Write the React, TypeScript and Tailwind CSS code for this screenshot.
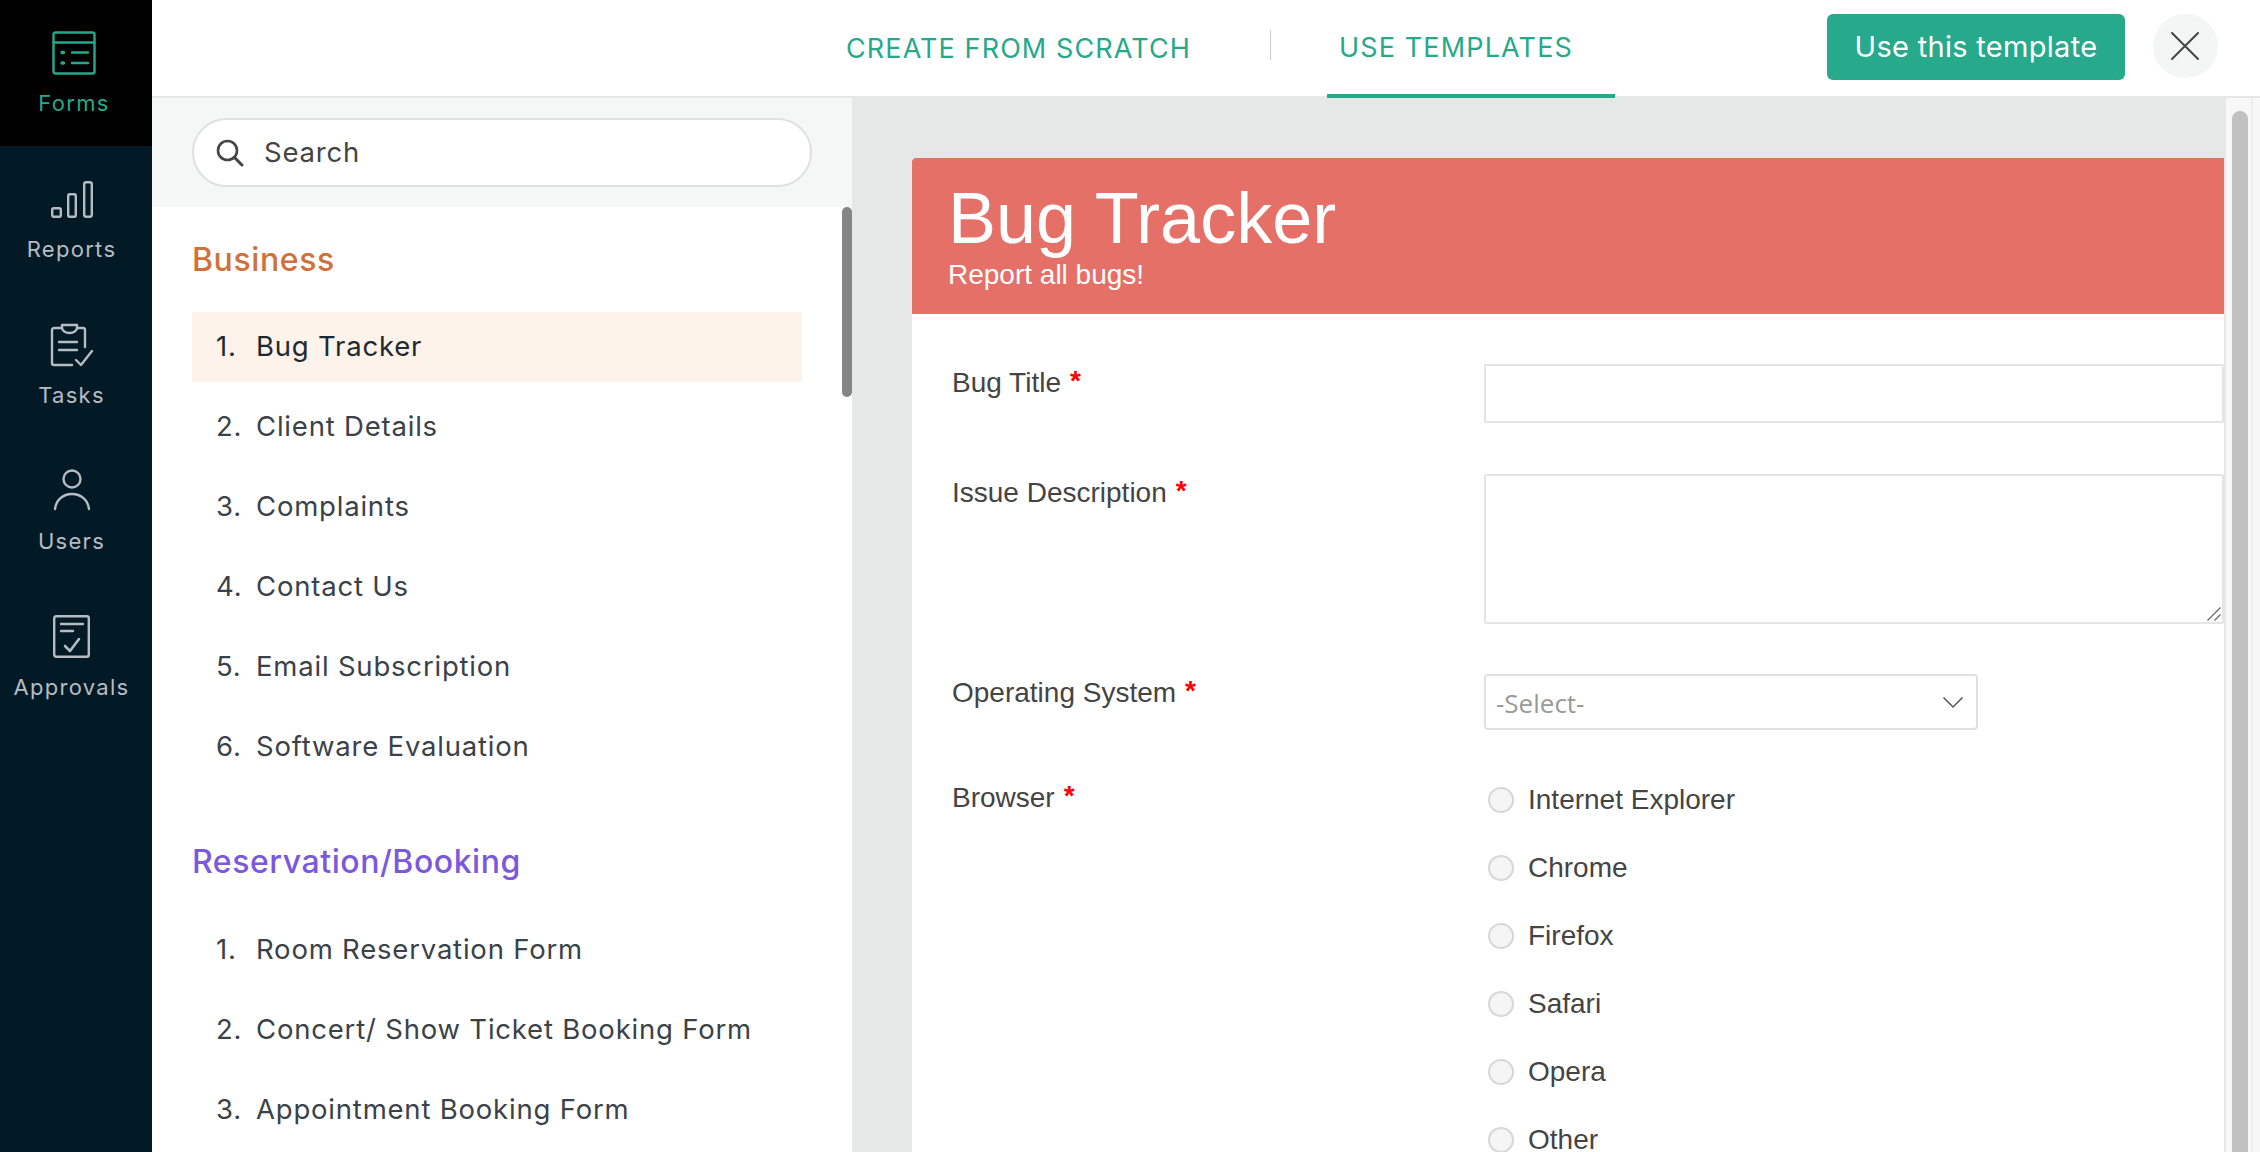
import React from "react";

function FormsIcon() {
  return (
    <svg width="44" height="44" viewBox="0 0 44 44" fill="none" stroke="#25a98a" strokeWidth="2.4" strokeLinecap="round" strokeLinejoin="round">
      <rect x="1.500" y="1.500" width="41" height="41" rx="2" />
      <path d="M1.500 11.500H42.500" />
      <path d="M10 21.500H11.500M10 32H11.500" strokeWidth="3.400" />
      <path d="M20 21.500H36M20 32H36" />
    </svg>
  );
}
function ReportsIcon() {
  return (
    <svg width="48" height="48" viewBox="0 0 48 48" fill="none" stroke="#b7bcc3" strokeWidth="2.400" strokeLinejoin="round">
      <rect x="3.200" y="33.200" width="8.600" height="8.600" rx="1.500" />
      <rect x="19.200" y="19.200" width="7.600" height="22.600" rx="1.500" />
      <rect x="35.200" y="7.200" width="7.600" height="34.600" rx="2" />
    </svg>
  );
}
function TasksIcon() {
  return (
    <svg width="48" height="48" viewBox="0 0 48 48" fill="none" stroke="#b7bcc3" strokeWidth="2.400" strokeLinecap="round" strokeLinejoin="round">
      <path d="M36 26V9a2 2 0 0 0-2-2h-6M13 7H5a2 2 0 0 0-2 2v33a2 2 0 0 0 2 2h18" />
      <path d="M13 4h15v3a7.500 5 0 0 1-15 0z" />
      <path d="M10 21H28M10 29H28" />
      <path d="M27 39l5 5 11-14" />
    </svg>
  );
}
function UsersIcon() {
  return (
    <svg width="48" height="48" viewBox="0 0 48 48" fill="none" stroke="#b7bcc3" strokeWidth="2.400" strokeLinecap="round">
      <circle cx="23" cy="12" r="8.500" />
      <path d="M6 42c1-9 8-15 17-15s16 6 17 15" />
    </svg>
  );
}
function ApprovalsIcon() {
  return (
    <svg width="48" height="48" viewBox="0 0 48 48" fill="none" stroke="#b7bcc3" strokeWidth="2.400" strokeLinecap="round" strokeLinejoin="round">
      <rect x="5.200" y="3.200" width="34.600" height="40.600" rx="2" />
      <path d="M12 11H34M12 18H24" />
      <path d="M16 33l5 5 9-12" strokeWidth="2.600" />
    </svg>
  );
}

const nav = [
  { label: "Forms", icon: <FormsIcon />, active: true },
  { label: "Reports", icon: <ReportsIcon /> },
  { label: "Tasks", icon: <TasksIcon /> },
  { label: "Users", icon: <UsersIcon /> },
  { label: "Approvals", icon: <ApprovalsIcon /> },
];

const business = ["Bug Tracker", "Client Details", "Complaints", "Contact Us", "Email Subscription", "Software Evaluation"];
const booking = ["Room Reservation Form", "Concert/ Show Ticket Booking Form", "Appointment Booking Form"];
const browsers = ["Internet Explorer", "Chrome", "Firefox", "Safari", "Opera", "Other"];

function Item({ n, text, active }: { n: number; text: string; active?: boolean }) {
  return (
    <div className={`flex h-[70px] w-[610px] items-center pl-[24px] text-[27.500px] tracking-[0.8px] ${active ? "bg-[#fdf3eb] text-[#1f2a30]" : "text-[#3a4248]"}`}>
      <span className="w-[40px]">{n}.</span>
      <span className="whitespace-nowrap">{text}</span>
    </div>
  );
}

function Req({ text }: { text: string }) {
  return (
    <div className="flex w-[532px] shrink-0 text-[28px] leading-[38px] text-[#444]">
      <span>{text}</span>
      <span className="ml-[9px] -translate-y-[2px] font-bold text-[#ff0000]">*</span>
    </div>
  );
}

export default function App() {
  return (
    <div className="flex h-[1152px] w-[2260px] overflow-hidden bg-white font-['Inter',sans-serif]">
      <aside className="w-[152px] shrink-0 bg-[#011a26]">
        {nav.map((n) => (
          <div key={n.label} className={`flex h-[146px] flex-col items-center pt-[29px] ${n.active ? "bg-black pr-[4px] text-[#25a98a]" : "pr-[6px] text-[#b7bcc3]"}`}>
            <div className="flex h-[48px] w-[48px] items-center justify-center">{n.icon}</div>
            <div className={`mt-[13px] text-[22px] leading-[26px] tracking-[1.3px] ${n.active ? "" : "mr-[3px]"}`}>{n.label}</div>
          </div>
        ))}
      </aside>

      <div className="flex min-w-0 flex-1 flex-col">
        <header className="flex h-[98px] shrink-0 items-start border-b-2 border-[#e6e8e7]">
          <div className="ml-[694px] flex h-[96px] items-center pt-[2px] text-[27px] tracking-[1.1px] text-[#25a98a]">
            <span className="whitespace-nowrap">CREATE FROM SCRATCH</span>
          </div>
          <div className="ml-[79px] mt-[30px] h-[30px] w-[1px] bg-[#cccccc]" />
          <div className="ml-[56px] flex h-[98px] w-[288px] items-center border-b-4 border-[#25a98a] pl-[12px] pt-[2px] text-[27px] tracking-[1.15px] text-[#25a98a]">
            USE TEMPLATES
          </div>
          <button className="ml-[212px] mt-[14px] h-[66px] w-[298px] rounded-[6px] bg-[#27a98b] text-[29px] tracking-[0.3px] text-white">
            Use this template
          </button>
          <div className="ml-[28px] mt-[14px] flex h-[64px] w-[65px] items-center justify-center rounded-full bg-[#f4f6f5]">
            <svg width="30" height="30" viewBox="0 0 30 30" fill="none" stroke="#444" strokeWidth="2" strokeLinecap="round">
              <path d="M2 2L28 28M28 2L2 28" />
            </svg>
          </div>
        </header>

        <div className="flex min-h-0 flex-1">
          <section className="relative flex h-full w-[700px] shrink-0 flex-col overflow-hidden">
            <div className="h-[109px] shrink-0 bg-[#f5f6f6] px-[40px] pt-[20px]">
              <div className="flex h-[69px] w-[620px] items-center rounded-full border-2 border-[#e0e0e0] bg-white pl-[21px]">
                <svg width="30" height="30" viewBox="0 0 30 30" fill="none" stroke="#444" strokeWidth="2.600" strokeLinecap="round">
                  <circle cx="12.500" cy="12.500" r="9.500" />
                  <path d="M19.500 19.500L27 27" strokeWidth="3" />
                </svg>
                <span className="ml-[19px] text-[27.500px] tracking-[0.8px] text-[#444]">Search</span>
              </div>
            </div>
            <div className="relative flex-1 overflow-hidden pl-[40px]">
              <div className="absolute right-0 top-0 h-[190px] w-[10px] rounded-full bg-[#858585]" />
              <h2 className="mt-[33px] text-[32px] font-medium leading-[40px] tracking-[0.6px] text-[#d2703a]">Business</h2>
              <div className="mt-[32px] flex flex-col gap-[10px]">
                {business.map((t, i) => (
                  <Item key={t} n={i + 1} text={t} active={i === 0} />
                ))}
              </div>
              <h2 className="mt-[60px] text-[32px] font-medium leading-[40px] tracking-[0.55px] text-[#7a59dc]">Reservation/Booking</h2>
              <div className="mt-[33px] flex flex-col gap-[10px]">
                {booking.map((t, i) => (
                  <Item key={t} n={i + 1} text={t} />
                ))}
              </div>
            </div>
          </section>

          <main className="min-w-0 flex-1 overflow-hidden bg-[#e6e8e7] pl-[60px] pt-[60px]">
            <div className="h-full w-[1312px] bg-white font-['Liberation_Sans',sans-serif]">
              <div className="h-[156px] rounded-tl-[4px] bg-[#e57067] pl-[36px] pt-[19px] text-white">
                <div className="text-[72px] leading-[83px]">Bug Tracker</div>
                <div className="text-[28px] leading-[30px]">Report all bugs!</div>
              </div>
              <div className="pl-[40px] pt-[50px]">
                <div className="flex">
                  <Req text="Bug Title" />
                  <input className="h-[59px] flex-1 rounded-[2px] border-2 border-[#e4e4e4] bg-white outline-none" />
                </div>
                <div className="mt-[51px] flex">
                  <Req text="Issue Description" />
                  <div className="relative h-[150px] flex-1">
                    <textarea className="block h-full w-full resize-none rounded-[2px] border-2 border-[#e4e4e4] bg-white outline-none" />
                    <svg className="absolute bottom-[3px] right-[3px]" width="14" height="14" viewBox="0 0 14 14" fill="none" stroke="#666" strokeWidth="1.200">
                      <path d="M0.500 13.500L13.500 0.500M7.500 13.500L13.500 7.500" />
                    </svg>
                  </div>
                </div>
                <div className="mt-[50px] flex">
                  <Req text="Operating System" />
                  <div className="flex h-[56px] w-[494px] items-center justify-between rounded-[4px] border-2 border-[#e0e0e0] pl-[10px] pr-[12px] font-['Open_Sans',sans-serif] text-[26px] text-[#9a9a9a]">
                    <span className="pt-[2px]">-Select-</span>
                    <svg width="22" height="14" viewBox="0 0 22 14" fill="none" stroke="#555" strokeWidth="1.500">
                      <path d="M1.500 2.500l9.500 9.500 9.500-9.500" />
                    </svg>
                  </div>
                </div>
                <div className="mt-[36px] flex">
                  <div className="pt-[13px]">
                    <Req text="Browser" />
                  </div>
                  <div className="flex flex-col">
                    {browsers.map((b) => (
                      <div key={b} className="flex h-[68px] items-center pl-[4px]">
                        <span className="h-[26px] w-[26px] shrink-0 rounded-full border-2 border-[#d6d6d6] bg-[#f5f5f5]" />
                        <span className="ml-[14px] text-[28px] text-[#444]">{b}</span>
                      </div>
                    ))}
                  </div>
                </div>
              </div>
            </div>
          </main>

          <div className="flex w-[36px] shrink-0 bg-[#e6e8e7]">
            <div className="ml-[2px] h-full w-[27px] border-r-2 border-[#eeeeee] bg-[#f7f7f7] pl-[6px] pt-[13px]">
              <div className="h-full w-[16px] rounded-t-full bg-[#c1c1c1]" />
            </div>
            <div className="flex-1 bg-[#f7f7f7]" />
          </div>
        </div>
      </div>
    </div>
  );
}
